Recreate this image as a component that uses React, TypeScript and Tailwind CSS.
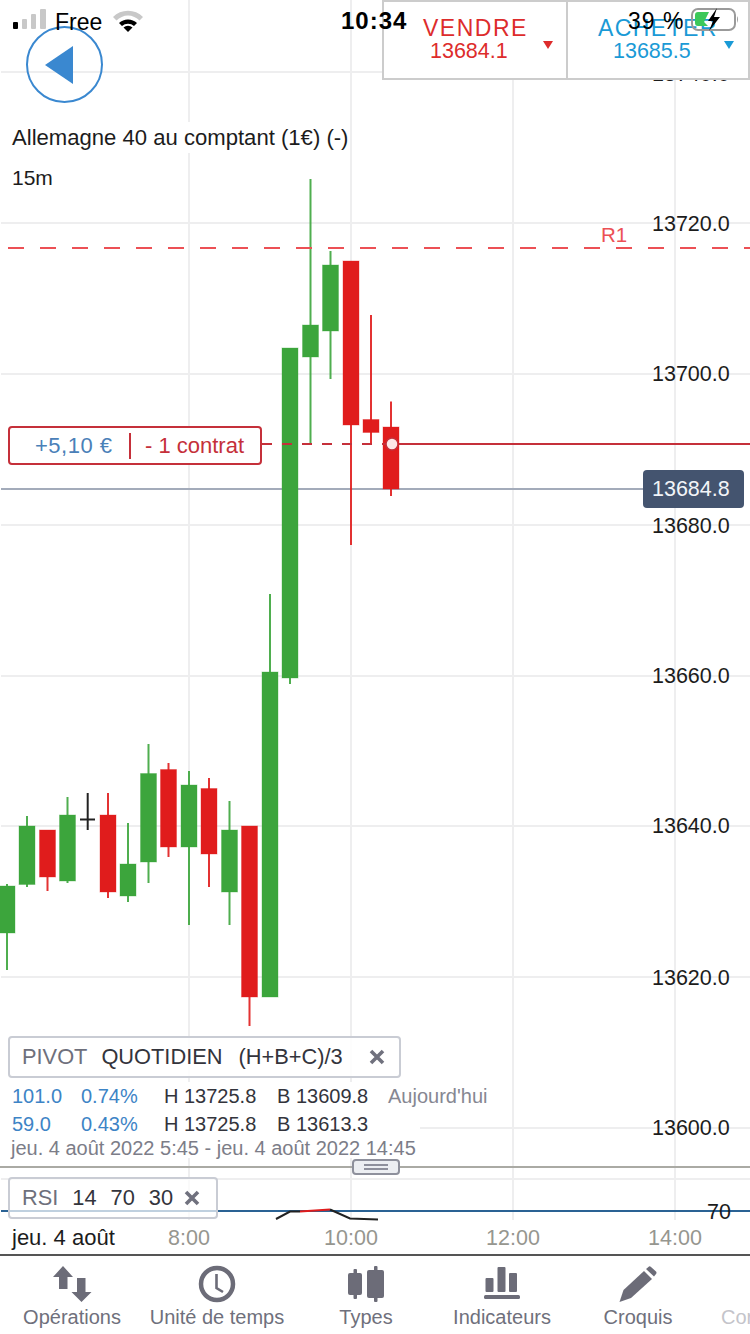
const green = '#3ca53c';
const red = '#e01c1c';

const candles = [
  { x: -1, o: 886, c: 933, hi: 884, lo: 970, col: green },
  { x: 19, o: 826, c: 884.5, hi: 816, lo: 887, col: green },
  { x: 39.5, o: 830, c: 877, hi: 830, lo: 891, col: red },
  { x: 59.5, o: 815, c: 881, hi: 797, lo: 883, col: green },
  { x: 100, o: 815, c: 892, hi: 793, lo: 898, col: red },
  { x: 120, o: 864, c: 896, hi: 823, lo: 902, col: green },
  { x: 140.5, o: 773.5, c: 862, hi: 744, lo: 883, col: green },
  { x: 160.5, o: 769.5, c: 847, hi: 763, lo: 857, col: red },
  { x: 181, o: 785, c: 847, hi: 771, lo: 925, col: green },
  { x: 201, o: 788.5, c: 854, hi: 778, lo: 887, col: red },
  { x: 221.5, o: 830, c: 892, hi: 801, lo: 925, col: green },
  { x: 241.5, o: 826, c: 997, hi: 826, lo: 1026, col: red },
  { x: 262, o: 672, c: 997, hi: 594, lo: 997, col: green },
  { x: 282, o: 348, c: 678, hi: 348, lo: 684, col: green },
  { x: 302.5, o: 325, c: 357, hi: 179, lo: 443, col: green },
  { x: 322.5, o: 265, c: 331, hi: 251, lo: 379, col: green },
  { x: 343, o: 261, c: 425, hi: 261, lo: 545, col: red },
  { x: 363, o: 419.5, c: 432.5, hi: 315, lo: 445, col: red },
  { x: 383, o: 427, c: 489, hi: 401.5, lo: 496, col: red },
];

const gridY = [72, 223, 374, 525, 676, 826, 977, 1128, 1179];
const gridX = [189, 351, 513, 675];
const priceLabels = [
  { y: 74, t: '13740.0' },
  { y: 224, t: '13720.0' },
  { y: 374, t: '13700.0' },
  { y: 526, t: '13680.0' },
  { y: 676, t: '13660.0' },
  { y: 826, t: '13640.0' },
  { y: 978, t: '13620.0' },
  { y: 1128, t: '13600.0' },
];
const timeLabels = [
  { x: 189, t: '8:00' },
  { x: 351, t: '10:00' },
  { x: 513, t: '12:00' },
  { x: 675, t: '14:00' },
];

function Chart() {
  return (
    <svg width="750" height="1254" viewBox="0 0 750 1254" className="absolute left-0 top-0">
      {gridY.map((y) => (
        <line key={y} x1="1" x2="750" y1={y} y2={y} stroke="#eeeeef" strokeWidth="2" />
      ))}
      {gridX.map((x) => (
        <line key={x} x1={x} x2={x} y1="0" y2="1220" stroke="#eeeeef" strokeWidth="2" />
      ))}
      <line x1="1" x2="645" y1="489" y2="489" stroke="#a3abba" strokeWidth="2" />
      {candles.map((k) => (
        <g key={k.x}>
          <line x1={k.x + 8} x2={k.x + 8} y1={k.hi} y2={k.lo} stroke={k.col} strokeWidth="2" strokeOpacity="0.9" />
          <rect x={k.x} y={k.o} width="16" height={k.c - k.o} fill={k.col} stroke={k.col} strokeOpacity="0.35" />
        </g>
      ))}
      <g stroke="#222" strokeWidth="2">
        <line x1="87.7" x2="87.7" y1="793" y2="830" />
        <line x1="80" x2="95" y1="819.5" y2="819.5" />
      </g>
      <line x1="8" x2="750" y1="248" y2="248" stroke="#ec5055" strokeWidth="2" strokeDasharray="16 16" />
      <line x1="262" x2="390" y1="444" y2="444" stroke="#c5303a" strokeWidth="2" strokeDasharray="10 10" />
      <line x1="399" x2="750" y1="444" y2="444" stroke="#c5303a" strokeWidth="2" />
      <circle cx="392" cy="444" r="6" fill="#fde8e8" stroke="#c5303a" strokeWidth="1.5" />
      <line x1="1" x2="750" y1="1211" y2="1211" stroke="#2a6294" strokeWidth="2" />
      <polyline points="276,1219 290,1211.5 300,1211.5" fill="none" stroke="#222" strokeWidth="2" />
      <polyline points="300,1211.5 330,1209.5" fill="none" stroke="#e01c1c" strokeWidth="2" />
      <polyline points="330,1209.5 350,1218.5 378,1219.5" fill="none" stroke="#222" strokeWidth="2" />
    </svg>
  );
}

function StatusBar() {
  return (
    <div className="absolute left-0 top-0 z-20 h-10 w-full text-black">
      <svg width="36" height="22" viewBox="0 0 36 22" className="absolute left-[12px] top-[8px]">
        <rect x="1" y="14" width="5" height="7" rx="1" fill="#000" />
        <rect x="10" y="11" width="5" height="10" rx="1" fill="#c8c8c8" />
        <rect x="19" y="6" width="5" height="15" rx="1" fill="#c8c8c8" />
        <rect x="28" y="1" width="6" height="20" rx="1" fill="#c8c8c8" />
      </svg>
      <span className="absolute left-[55px] top-[9px] text-[23px] leading-[26px]">Free</span>
      <svg width="30" height="23" viewBox="0 0 30 23" className="absolute left-[113px] top-[9px]">
        <path d="M0 8 A21 21 0 0 1 30 8 L26.5 11.5 A16 16 0 0 0 3.5 11.5 Z" fill="#c8c8c8" />
        <path d="M6 14 A13 13 0 0 1 24 14 L21 17 A9 9 0 0 0 9 17 Z" fill="#000" />
        <path d="M10.5 18.5 A6.5 6.5 0 0 1 19.5 18.5 L15 23 Z" fill="#000" />
      </svg>
      <span className="absolute left-[341px] top-[7px] text-[24px] font-bold leading-[27px] tracking-[1px]">10:34</span>
      <span className="absolute left-[628px] top-[8px] text-[23px] leading-[27px] tracking-[1px]">39 %</span>
      <svg width="50" height="24" viewBox="0 0 50 24" className="absolute left-[691px] top-[7px]">
        <rect x="1" y="2" width="43" height="21" rx="6" fill="none" stroke="#9a9a9a" strokeWidth="2" />
        <path d="M7 5 H18 L13 15 L17 19 H7 Q4 19 4 16 V8 Q4 5 7 5 Z" fill="#3cc85a" />
        <path d="M46 9 Q48 12 46 16 Z" fill="#9a9a9a" />
        <path d="M26 1 L17 14 H22 L18 24 L29 10 H23 Z" fill="#000" />
      </svg>
    </div>
  );
}

function TradeButtons() {
  return (
    <div className="absolute right-0 top-0 z-10 grid h-[80px] w-[368px] grid-cols-[184px_1fr] border-2 border-[#cccccc] bg-white">
      <div className="relative border-r-2 border-[#cccccc] text-[#dd2c2c]">
        <div className="pl-[39px] pt-[13px] text-[23px] leading-[26px] tracking-[1.5px]">VENDRE</div>
        <div className="pl-[46px] text-[21.5px] leading-[20px]">13684.1</div>
        <span className="absolute left-[159px] top-[39px] h-0 w-0 border-x-[5px] border-t-[8px] border-x-transparent border-t-[#dd2c2c]" />
      </div>
      <div className="relative text-[#1a9ad6]">
        <div className="pl-[30px] pt-[13px] text-[23px] leading-[26px] tracking-[1.4px]">ACHETER</div>
        <div className="pl-[45px] text-[21.5px] leading-[20px]">13685.5</div>
        <span className="absolute left-[156px] top-[39px] h-0 w-0 border-x-[5px] border-t-[8px] border-x-transparent border-t-[#1a9ad6]" />
      </div>
    </div>
  );
}

function CloseX() {
  return (
    <svg width="16" height="16" viewBox="0 0 16 16" className="block">
      <path d="M2 2 L14 14 M14 2 L2 14" stroke="#70717e" strokeWidth="3.6" />
    </svg>
  );
}

function PivotLegend() {
  return (
    <div className="absolute left-0 top-[1036px] z-10">
      <div className="ml-2 flex h-[42px] w-[393px] items-center rounded border-2 border-[#c9ccd4] bg-white/90 pl-[12px] text-[21.8px] text-[#33343c]">
        <span className="text-[#6e707c]">PIVOT</span>
        <span className="ml-[14px]">QUOTIDIEN</span>
        <span className="ml-[16px]">(H+B+C)/3</span>
        <span className="ml-[26px]"><CloseX /></span>
      </div>
      <div className="mt-[4px] w-[490px] text-[20px] leading-[28px] text-[#33343c]">
        <div className="flex bg-white pl-3">
          <span className="w-[69px] text-[#3d84c6]">101.0</span>
          <span className="w-[83px] text-[#3d84c6]">0.74%</span>
          <span className="w-[113px]">H 13725.8</span>
          <span className="w-[111px]">B 13609.8</span>
          <span className="text-[#868792]">Aujourd'hui</span>
        </div>
        <div className="flex w-[420px] bg-white pl-3">
          <span className="w-[69px] text-[#3d84c6]">59.0</span>
          <span className="w-[83px] text-[#3d84c6]">0.43%</span>
          <span className="w-[113px]">H 13725.8</span>
          <span className="w-[111px]">B 13613.3</span>
        </div>
        <div className="w-[420px] bg-white pl-[11px] text-[20px] leading-[20px] text-[#7c7d88]">
          jeu. 4 août 2022 5:45 - jeu. 4 août 2022 14:45
        </div>
      </div>
    </div>
  );
}

function NavItem({ label, width, children }: { label: string; width: string; children: React.ReactNode }) {
  return (
    <div className={`flex shrink-0 flex-col items-center ${width}`}>
      <div className="flex h-[36px] items-center">{children}</div>
      <span className="mt-[3px] whitespace-nowrap text-[20px] leading-[24px] text-[#6f707c]">{label}</span>
    </div>
  );
}

function BottomNav() {
  return (
    <nav className="flex h-[80px] overflow-hidden border-t-2 border-[#555555] bg-white pt-[10px]">
      <NavItem label="Opérations" width="w-[144px]">
        <svg width="39" height="36" viewBox="0 0 39 36" fill="#6c6c78">
          <path d="M10 0 L20 11 H14.5 V23 H6 V11 H0 Z" />
          <path d="M24 12 H32.5 V26 H38.5 L28.5 36 L18.5 26 H24 Z" />
        </svg>
      </NavItem>
      <NavItem label="Unité de temps" width="w-[146px]">
        <svg width="38" height="38" viewBox="0 0 38 38" fill="none" stroke="#6c6c78">
          <circle cx="19" cy="19" r="16" strokeWidth="4.5" />
          <path d="M18.5 9 V23 L25 27" strokeWidth="2.6" />
        </svg>
      </NavItem>
      <NavItem label="Types" width="w-[152px]">
        <svg width="37" height="36" viewBox="0 0 37 36" fill="#6c6c78">
          <rect x="0" y="7" width="14" height="22" rx="2" />
          <rect x="5.5" y="3" width="3.5" height="30" rx="1" />
          <rect x="19" y="4" width="17" height="28" rx="2" />
          <rect x="26" y="0" width="3.5" height="36" rx="1" />
        </svg>
      </NavItem>
      <NavItem label="Indicateurs" width="w-[120px]">
        <svg width="36" height="34" viewBox="0 0 36 34" fill="#6c6c78">
          <rect x="1.5" y="11" width="8" height="14" rx="1" />
          <rect x="13.5" y="0" width="8" height="25" rx="1" />
          <rect x="25" y="6" width="8" height="19" rx="1" />
          <rect x="0" y="28" width="36" height="4" rx="1.5" />
        </svg>
      </NavItem>
      <NavItem label="Croquis" width="w-[152px]">
        <svg width="38" height="36" viewBox="0 0 38 36" fill="#6c6c78">
          <path d="M0.5 36 L4.5 24 L25 5 L33 13 L12 32 Z" />
          <path d="M27 3 L30 0.5 Q31 0 32 1 L37 5.5 Q38 6.5 37 8 L35 10.5 Z" />
        </svg>
      </NavItem>
      <div className="ml-[7px] flex shrink-0 flex-col">
        <div className="h-[36px]" />
        <span className="mt-[3px] text-[20px] leading-[24px] text-[#c4c4ca]">Cor</span>
      </div>
    </nav>
  );
}

export default function App() {
  return (
    <div className="flex h-[1334px] w-[750px] flex-col overflow-hidden bg-white font-['Liberation_Sans',Arial,sans-serif]">
      <main className="relative h-[1254px] shrink-0">
        <Chart />
        <StatusBar />
        <TradeButtons />

        <div className="absolute left-[26px] top-[26px] z-10 flex h-[77px] w-[77px] items-center justify-center rounded-full border-2 border-[#3a88d0]">
          <span className="mr-[11px] h-0 w-0 border-y-[19px] border-r-[28px] border-y-transparent border-r-[#3a88d0]" />
        </div>

        <div className="absolute left-0 top-[122px] bg-white pl-3 pr-[2px] text-[22.1px] leading-[31px] text-[#1c1c1c]">
          Allemagne 40 au comptant (1€) (-)
        </div>
        <div className="absolute left-3 top-[166px] text-[21px] leading-[24px] text-[#1c1c1c]">15m</div>
        <div className="absolute left-[601px] top-[223px] text-[20.5px] leading-[24px] text-[#ec5055]">R1</div>

        <div className="absolute left-2 top-[426px] flex h-[39px] w-[254px] items-center rounded border-2 border-[#c5303a] bg-white text-[22px]">
          <span className="ml-[25px] w-[94px] tracking-[0.5px] text-[#4a80b8]">+5,10 €</span>
          <span className="h-[26px] w-[2px] bg-[#c5303a]" />
          <span className="ml-[14px] text-[#c5303a]">- 1 contrat</span>
        </div>

        {priceLabels.map((p) => (
          <span
            key={p.t}
            className="absolute left-[652px] -translate-y-1/2 text-[21.5px] leading-[24px] text-[#1c1c1c]"
            style={{ top: p.y }}
          >
            {p.t}
          </span>
        ))}
        <div className="absolute left-[643px] top-[470px] flex h-[38px] w-[101px] items-center rounded bg-[#44546f] pl-[9px] text-[21.5px] text-[#f2f4f8]">
          13684.8
        </div>

        <PivotLegend />

        <div className="absolute left-[352px] top-[1167px] z-10 flex h-[16px] w-[48px] -translate-y-[8px] flex-col items-center justify-center gap-[2px] rounded border-2 border-[#8e909c] bg-[#eceef2]">
          <span className="h-[2px] w-[24px] bg-[#8e909c]" />
          <span className="h-[2px] w-[24px] bg-[#8e909c]" />
        </div>
        <div className="absolute left-0 top-[1166px] h-[2px] w-full bg-[#aaaaa4]" />

        <div className="absolute left-2 top-[1177px] z-10 flex h-[42px] w-[210px] items-center rounded border-2 border-[#c9ccd4] bg-white/70 pl-[12px] text-[21.8px] text-[#33343c]">
          <span className="text-[#6e707c]">RSI</span>
          <span className="ml-[14px]">14</span>
          <span className="ml-[14px]">70</span>
          <span className="ml-[14px]">30</span>
          <span className="ml-[11px]"><CloseX /></span>
        </div>
        <span className="absolute left-[707px] top-[1200px] text-[21.5px] leading-[24px] text-[#1c1c1c]">70</span>

        <div className="absolute left-0 top-[1222px] w-[126px] bg-white pl-3 text-[22px] leading-[32px] text-[#1c1c1c]">jeu. 4 août</div>
        {timeLabels.map((t) => (
          <span
            key={t.t}
            className="absolute top-[1226px] -translate-x-1/2 text-[21.5px] leading-[24px] text-[#96968f]"
            style={{ left: t.x }}
          >
            {t.t}
          </span>
        ))}
      </main>
      <BottomNav />
    </div>
  );
}
